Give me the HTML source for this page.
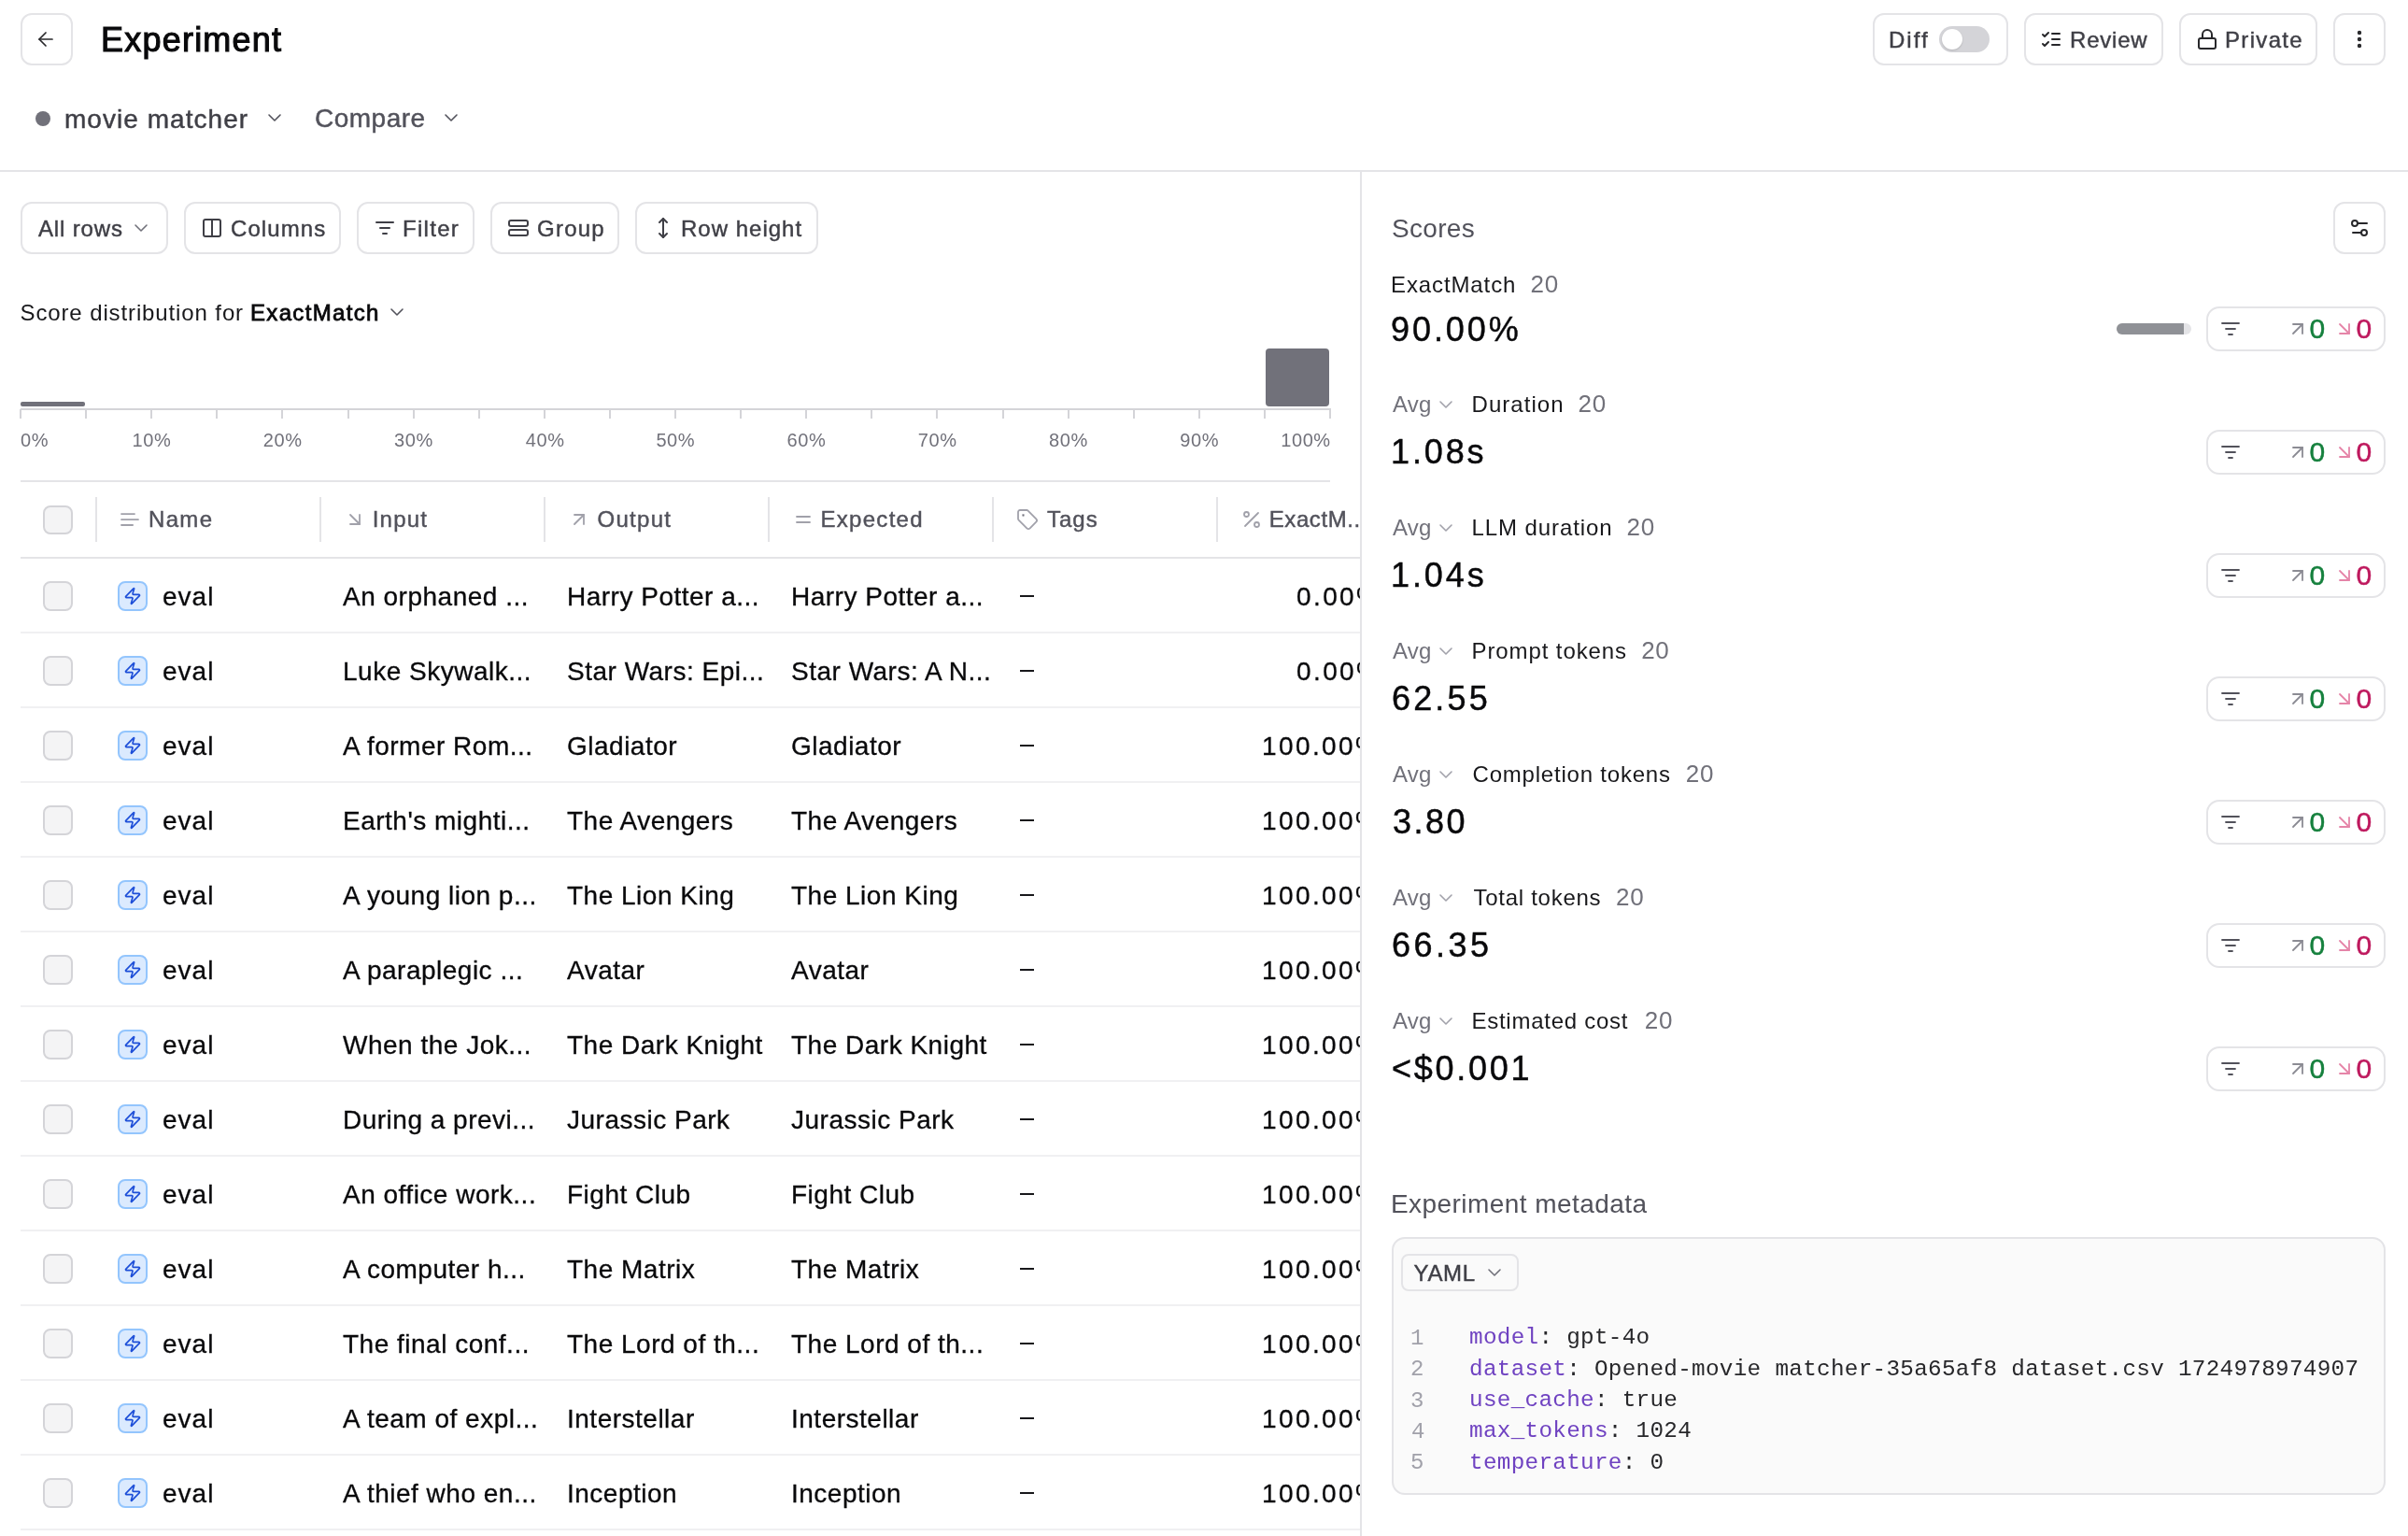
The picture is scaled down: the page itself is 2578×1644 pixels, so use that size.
<!DOCTYPE html>
<html><head><meta charset="utf-8"><title>Experiment</title>
<style>
html,body{margin:0;padding:0;background:#fff;}
body{width:2578px;height:1644px;position:relative;overflow:hidden;font-family:'Liberation Sans',sans-serif;}
.t{position:absolute;white-space:pre;}
.b{position:absolute;}
svg.b{overflow:visible;}
</style></head><body>
<div id="root" style="position:absolute;left:0;top:0;width:2578px;height:1644px;will-change:transform;background:#fff">
<div class="b" style="left:22px;top:14px;width:56px;height:56px;background:#fff;border:2px solid #e4e4e7;border-radius:12px;box-sizing:border-box;"></div>
<svg class="b" style="left:37px;top:30px;" width="24" height="24" viewBox="0 0 24 24" fill="none" stroke="#27272a" stroke-width="1.7" stroke-linecap="round" stroke-linejoin="round"><path d="m12 19-7-7 7-7"/><path d="M19 12H5"/></svg>
<div class="t" style="left:108.00px;top:25px;font:400 36px/36px 'Liberation Sans',sans-serif;color:#09090b;letter-spacing:1.222px;-webkit-text-stroke:1.1px #09090b;">Experiment</div>
<div class="b" style="left:38px;top:119px;width:16px;height:16px;background:#71717a;border-radius:8px;box-sizing:border-box;"></div>
<div class="t" style="left:69.00px;top:114px;font:400 28px/28px 'Liberation Sans',sans-serif;color:#3f3f46;letter-spacing:1.042px;-webkit-text-stroke:0.45px #3f3f46;">movie matcher</div>
<svg class="b" style="left:282px;top:114px;" width="24" height="24" viewBox="0 0 24 24" fill="none" stroke="#52525b" stroke-width="1.6" stroke-linecap="round" stroke-linejoin="round"><path d="m6 9 6 6 6-6"/></svg>
<div class="t" style="left:337.00px;top:113px;font:400 28px/28px 'Liberation Sans',sans-serif;color:#52525b;letter-spacing:0.500px;-webkit-text-stroke:0.45px #52525b;">Compare</div>
<svg class="b" style="left:471px;top:114px;" width="24" height="24" viewBox="0 0 24 24" fill="none" stroke="#52525b" stroke-width="1.6" stroke-linecap="round" stroke-linejoin="round"><path d="m6 9 6 6 6-6"/></svg>
<div class="b" style="left:0px;top:182px;width:2578px;height:2px;background:#e4e4e7;border-radius:0px;box-sizing:border-box;"></div>
<div class="b" style="left:2005px;top:14px;width:145px;height:56px;background:#fff;border:2px solid #e4e4e7;border-radius:12px;box-sizing:border-box;"></div>
<div class="t" style="left:2022.00px;top:31px;font:400 24px/24px 'Liberation Sans',sans-serif;color:#3f3f46;letter-spacing:2.000px;-webkit-text-stroke:0.45px #3f3f46;">Diff</div>
<div class="b" style="left:2076px;top:28px;width:54px;height:28px;background:#d4d4d8;border-radius:14px;box-sizing:border-box;"></div>
<div class="b" style="left:2079px;top:31px;width:22px;height:22px;background:#fff;border-radius:11px;box-sizing:border-box;box-shadow:0 1px 2px rgba(0,0,0,.15)"></div>
<div class="b" style="left:2167px;top:14px;width:149px;height:56px;background:#fff;border:2px solid #e4e4e7;border-radius:12px;box-sizing:border-box;"></div>
<svg class="b" style="left:2184px;top:30px;" width="24" height="24" viewBox="0 0 24 24" fill="none" stroke="#27272a" stroke-width="2" stroke-linecap="round" stroke-linejoin="round"><path d="m3 17 2 2 4-4"/><path d="m3 7 2 2 4-4"/><path d="M13 6h8"/><path d="M13 12h8"/><path d="M13 18h8"/></svg>
<div class="t" style="left:2216.00px;top:31px;font:400 24px/24px 'Liberation Sans',sans-serif;color:#3f3f46;letter-spacing:0.800px;-webkit-text-stroke:0.45px #3f3f46;">Review</div>
<div class="b" style="left:2333px;top:14px;width:148px;height:56px;background:#fff;border:2px solid #e4e4e7;border-radius:12px;box-sizing:border-box;"></div>
<svg class="b" style="left:2351px;top:30px;" width="24" height="24" viewBox="0 0 24 24" fill="none" stroke="#27272a" stroke-width="2" stroke-linecap="round" stroke-linejoin="round"><rect width="18" height="11" x="3" y="11" rx="2" ry="2"/><path d="M7 11V7a5 5 0 0 1 10 0v4"/></svg>
<div class="t" style="left:2382.00px;top:31px;font:400 24px/24px 'Liberation Sans',sans-serif;color:#3f3f46;letter-spacing:1.333px;-webkit-text-stroke:0.45px #3f3f46;">Private</div>
<div class="b" style="left:2498px;top:14px;width:56px;height:56px;background:#fff;border:2px solid #e4e4e7;border-radius:12px;box-sizing:border-box;"></div>
<svg class="b" style="left:2514px;top:30px;" width="24" height="24" viewBox="0 0 24 24" fill="none" stroke="#27272a" stroke-width="2.4" stroke-linecap="round" stroke-linejoin="round"><circle cx="12" cy="12" r="1"/><circle cx="12" cy="5" r="1"/><circle cx="12" cy="19" r="1"/></svg>
<div class="b" style="left:22px;top:216px;width:158px;height:56px;background:#fff;border:2px solid #e4e4e7;border-radius:12px;box-sizing:border-box;"></div>
<div class="t" style="left:41.00px;top:233px;font:400 24px/24px 'Liberation Sans',sans-serif;color:#3f3f46;letter-spacing:0.857px;-webkit-text-stroke:0.45px #3f3f46;">All rows</div>
<svg class="b" style="left:139px;top:232px;" width="24" height="24" viewBox="0 0 24 24" fill="none" stroke="#71717a" stroke-width="1.6" stroke-linecap="round" stroke-linejoin="round"><path d="m6 9 6 6 6-6"/></svg>
<div class="b" style="left:197px;top:216px;width:168px;height:56px;background:#fff;border:2px solid #e4e4e7;border-radius:12px;box-sizing:border-box;"></div>
<svg class="b" style="left:215px;top:232px;" width="24" height="24" viewBox="0 0 24 24" fill="none" stroke="#3f3f46" stroke-width="2" stroke-linecap="round" stroke-linejoin="round"><rect width="18" height="18" x="3" y="3" rx="2"/><path d="M12 3v18"/></svg>
<div class="t" style="left:247.00px;top:233px;font:400 24px/24px 'Liberation Sans',sans-serif;color:#3f3f46;letter-spacing:1.083px;-webkit-text-stroke:0.45px #3f3f46;">Columns</div>
<div class="b" style="left:382px;top:216px;width:126px;height:56px;background:#fff;border:2px solid #e4e4e7;border-radius:12px;box-sizing:border-box;"></div>
<svg class="b" style="left:400px;top:232px;" width="24" height="24" viewBox="0 0 24 24" fill="none" stroke="#3f3f46" stroke-width="2" stroke-linecap="round" stroke-linejoin="round"><path d="M3 6h18"/><path d="M7 12h10"/><path d="M10 18h4"/></svg>
<div class="t" style="left:431.00px;top:233px;font:400 24px/24px 'Liberation Sans',sans-serif;color:#3f3f46;letter-spacing:1.300px;-webkit-text-stroke:0.45px #3f3f46;">Filter</div>
<div class="b" style="left:525px;top:216px;width:138px;height:56px;background:#fff;border:2px solid #e4e4e7;border-radius:12px;box-sizing:border-box;"></div>
<svg class="b" style="left:543px;top:232px;" width="24" height="24" viewBox="0 0 24 24" fill="none" stroke="#3f3f46" stroke-width="2" stroke-linecap="round" stroke-linejoin="round"><rect width="20" height="6" x="2" y="4" rx="2"/><rect width="20" height="6" x="2" y="14" rx="2"/></svg>
<div class="t" style="left:575.00px;top:233px;font:400 24px/24px 'Liberation Sans',sans-serif;color:#3f3f46;letter-spacing:1.250px;-webkit-text-stroke:0.45px #3f3f46;">Group</div>
<div class="b" style="left:680px;top:216px;width:196px;height:56px;background:#fff;border:2px solid #e4e4e7;border-radius:12px;box-sizing:border-box;"></div>
<svg class="b" style="left:698px;top:232px;" width="24" height="24" viewBox="0 0 24 24" fill="none" stroke="#3f3f46" stroke-width="2" stroke-linecap="round" stroke-linejoin="round"><path d="M12 2v20"/><path d="m8 18 4 4 4-4"/><path d="m8 6 4-4 4 4"/></svg>
<div class="t" style="left:729.00px;top:233px;font:400 24px/24px 'Liberation Sans',sans-serif;color:#3f3f46;letter-spacing:1.000px;-webkit-text-stroke:0.45px #3f3f46;">Row height</div>
<div class="t" style="left:21.50px;top:323px;font:400 24px/24px 'Liberation Sans',sans-serif;color:#18181b;letter-spacing:0.881px;">Score distribution for</div>
<div class="t" style="left:268.00px;top:323px;font:400 24px/24px 'Liberation Sans',sans-serif;color:#09090b;letter-spacing:1.333px;-webkit-text-stroke:0.8px #09090b;">ExactMatch</div>
<svg class="b" style="left:413px;top:322px;" width="24" height="24" viewBox="0 0 24 24" fill="none" stroke="#52525b" stroke-width="1.6" stroke-linecap="round" stroke-linejoin="round"><path d="m6 9 6 6 6-6"/></svg>
<div class="b" style="left:22px;top:430px;width:69px;height:5px;background:#71717a;border-radius:2px;box-sizing:border-box;"></div>
<div class="b" style="left:1355px;top:373px;width:68px;height:62px;background:#71717a;border-radius:4px;box-sizing:border-box;"></div>
<div class="b" style="left:22px;top:437px;width:1403px;height:2px;background:#d4d4d8;border-radius:0px;box-sizing:border-box;"></div>
<div class="b" style="left:21.0px;top:438px;width:2px;height:10px;background:#d4d4d8"></div>
<div class="b" style="left:91.1px;top:438px;width:2px;height:10px;background:#d4d4d8"></div>
<div class="b" style="left:161.2px;top:438px;width:2px;height:10px;background:#d4d4d8"></div>
<div class="b" style="left:231.3px;top:438px;width:2px;height:10px;background:#d4d4d8"></div>
<div class="b" style="left:301.4px;top:438px;width:2px;height:10px;background:#d4d4d8"></div>
<div class="b" style="left:371.5px;top:438px;width:2px;height:10px;background:#d4d4d8"></div>
<div class="b" style="left:441.6px;top:438px;width:2px;height:10px;background:#d4d4d8"></div>
<div class="b" style="left:511.7px;top:438px;width:2px;height:10px;background:#d4d4d8"></div>
<div class="b" style="left:581.8px;top:438px;width:2px;height:10px;background:#d4d4d8"></div>
<div class="b" style="left:651.9px;top:438px;width:2px;height:10px;background:#d4d4d8"></div>
<div class="b" style="left:722.0px;top:438px;width:2px;height:10px;background:#d4d4d8"></div>
<div class="b" style="left:792.1px;top:438px;width:2px;height:10px;background:#d4d4d8"></div>
<div class="b" style="left:862.2px;top:438px;width:2px;height:10px;background:#d4d4d8"></div>
<div class="b" style="left:932.3px;top:438px;width:2px;height:10px;background:#d4d4d8"></div>
<div class="b" style="left:1002.4px;top:438px;width:2px;height:10px;background:#d4d4d8"></div>
<div class="b" style="left:1072.5px;top:438px;width:2px;height:10px;background:#d4d4d8"></div>
<div class="b" style="left:1142.6px;top:438px;width:2px;height:10px;background:#d4d4d8"></div>
<div class="b" style="left:1212.7px;top:438px;width:2px;height:10px;background:#d4d4d8"></div>
<div class="b" style="left:1282.8px;top:438px;width:2px;height:10px;background:#d4d4d8"></div>
<div class="b" style="left:1352.9px;top:438px;width:2px;height:10px;background:#d4d4d8"></div>
<div class="b" style="left:1423.0px;top:438px;width:2px;height:10px;background:#d4d4d8"></div>
<div class="t" style="left:22.00px;top:461px;font:400 20px/20px 'Liberation Sans',sans-serif;color:#71717a;letter-spacing:0.600px;">0%</div>
<div class="t" style="left:141.60px;top:461px;font:400 20px/20px 'Liberation Sans',sans-serif;color:#71717a;letter-spacing:0.600px;">10%</div>
<div class="t" style="left:281.80px;top:461px;font:400 20px/20px 'Liberation Sans',sans-serif;color:#71717a;letter-spacing:0.600px;">20%</div>
<div class="t" style="left:422.00px;top:461px;font:400 20px/20px 'Liberation Sans',sans-serif;color:#71717a;letter-spacing:0.600px;">30%</div>
<div class="t" style="left:562.70px;top:461px;font:400 20px/20px 'Liberation Sans',sans-serif;color:#71717a;letter-spacing:0.600px;">40%</div>
<div class="t" style="left:702.40px;top:461px;font:400 20px/20px 'Liberation Sans',sans-serif;color:#71717a;letter-spacing:0.600px;">50%</div>
<div class="t" style="left:842.60px;top:461px;font:400 20px/20px 'Liberation Sans',sans-serif;color:#71717a;letter-spacing:0.600px;">60%</div>
<div class="t" style="left:982.80px;top:461px;font:400 20px/20px 'Liberation Sans',sans-serif;color:#71717a;letter-spacing:0.600px;">70%</div>
<div class="t" style="left:1123.00px;top:461px;font:400 20px/20px 'Liberation Sans',sans-serif;color:#71717a;letter-spacing:0.600px;">80%</div>
<div class="t" style="left:1263.20px;top:461px;font:400 20px/20px 'Liberation Sans',sans-serif;color:#71717a;letter-spacing:0.600px;">90%</div>
<div class="t" style="left:1371.20px;top:461px;font:400 20px/20px 'Liberation Sans',sans-serif;color:#71717a;letter-spacing:0.600px;">100%</div>
<div class="b" style="left:0;top:500px;width:1456px;height:1144px;overflow:hidden">
<div class="b" style="left:22px;top:14px;width:1402px;height:2px;background:#e4e4e7;border-radius:0px;box-sizing:border-box;"></div>
<div class="b" style="left:46px;top:40.5px;width:32px;height:31.5px;background:#f4f4f5;border:2px solid #d4d4d8;border-radius:8px;box-sizing:border-box;"></div>
<div class="b" style="left:102px;top:32px;width:2px;height:48px;background:#e4e4e7;border-radius:0px;box-sizing:border-box;"></div>
<div class="b" style="left:342px;top:32px;width:2px;height:48px;background:#e4e4e7;border-radius:0px;box-sizing:border-box;"></div>
<div class="b" style="left:582px;top:32px;width:2px;height:48px;background:#e4e4e7;border-radius:0px;box-sizing:border-box;"></div>
<div class="b" style="left:822px;top:32px;width:2px;height:48px;background:#e4e4e7;border-radius:0px;box-sizing:border-box;"></div>
<div class="b" style="left:1062px;top:32px;width:2px;height:48px;background:#e4e4e7;border-radius:0px;box-sizing:border-box;"></div>
<div class="b" style="left:1302px;top:32px;width:2px;height:48px;background:#e4e4e7;border-radius:0px;box-sizing:border-box;"></div>
<div class="b" style="left:22px;top:96px;width:1434px;height:2px;background:#e4e4e7;border-radius:0px;box-sizing:border-box;"></div>
<svg class="b" style="left:127px;top:44px;" width="24" height="24" viewBox="0 0 24 24" fill="none" stroke="#a1a1aa" stroke-width="1.8" stroke-linecap="round" stroke-linejoin="round"><path d="M17 6.1H3"/><path d="M21 12.1H3"/><path d="M15.1 18H3"/></svg>
<div class="t" style="left:159.00px;top:44px;font:400 24px/24px 'Liberation Sans',sans-serif;color:#52525b;letter-spacing:1.333px;-webkit-text-stroke:0.45px #52525b;">Name</div>
<svg class="b" style="left:368px;top:44px;" width="24" height="24" viewBox="0 0 24 24" fill="none" stroke="#a1a1aa" stroke-width="1.8" stroke-linecap="round" stroke-linejoin="round"><path d="M7 7l10 10"/><path d="M17 7v10H7"/></svg>
<div class="t" style="left:398.75px;top:44px;font:400 24px/24px 'Liberation Sans',sans-serif;color:#52525b;letter-spacing:1.188px;-webkit-text-stroke:0.45px #52525b;">Input</div>
<svg class="b" style="left:608px;top:44px;" width="24" height="24" viewBox="0 0 24 24" fill="none" stroke="#a1a1aa" stroke-width="1.8" stroke-linecap="round" stroke-linejoin="round"><path d="M7 17 17 7"/><path d="M7 7h10v10"/></svg>
<div class="t" style="left:639.40px;top:44px;font:400 24px/24px 'Liberation Sans',sans-serif;color:#52525b;letter-spacing:1.320px;-webkit-text-stroke:0.45px #52525b;">Output</div>
<svg class="b" style="left:848px;top:44px;" width="24" height="24" viewBox="0 0 24 24" fill="none" stroke="#a1a1aa" stroke-width="1.8" stroke-linecap="round" stroke-linejoin="round"><path d="M5 9h14"/><path d="M5 15h14"/></svg>
<div class="t" style="left:878.50px;top:44px;font:400 24px/24px 'Liberation Sans',sans-serif;color:#52525b;letter-spacing:1.286px;-webkit-text-stroke:0.45px #52525b;">Expected</div>
<svg class="b" style="left:1088px;top:44px;" width="24" height="24" viewBox="0 0 24 24" fill="none" stroke="#a1a1aa" stroke-width="1.8" stroke-linecap="round" stroke-linejoin="round"><path d="M12.586 2.586A2 2 0 0 0 11.172 2H4a2 2 0 0 0-2 2v7.172a2 2 0 0 0 .586 1.414l8.704 8.704a2.426 2.426 0 0 0 3.42 0l6.58-6.58a2.426 2.426 0 0 0 0-3.42z"/><circle cx="7.5" cy="7.5" r=".5" fill="currentColor"/></svg>
<div class="t" style="left:1121.00px;top:44px;font:400 24px/24px 'Liberation Sans',sans-serif;color:#52525b;letter-spacing:1.000px;-webkit-text-stroke:0.45px #52525b;">Tags</div>
<svg class="b" style="left:1328px;top:44px;" width="24" height="24" viewBox="0 0 24 24" fill="none" stroke="#a1a1aa" stroke-width="1.8" stroke-linecap="round" stroke-linejoin="round"><line x1="19" x2="5" y1="5" y2="19"/><circle cx="6.5" cy="6.5" r="2.5"/><circle cx="17.5" cy="17.5" r="2.5"/></svg>
<div class="t" style="left:1358.70px;top:44px;font:400 24px/24px 'Liberation Sans',sans-serif;color:#52525b;letter-spacing:0.600px;-webkit-text-stroke:0.45px #52525b;">ExactM...</div>
<div class="b" style="left:46px;top:122px;width:32px;height:32px;background:#f4f4f5;border:2px solid #d4d4d8;border-radius:8px;box-sizing:border-box;"></div>
<div class="b" style="left:126px;top:122px;width:32px;height:32px;background:#dbeafe;border:2px solid #93c5fd;border-radius:8px;box-sizing:border-box;"></div>
<svg class="b" style="left:132px;top:128px;" width="20" height="20" viewBox="0 0 24 24" fill="none" stroke="#1d4ed8" stroke-width="2.0" stroke-linecap="round" stroke-linejoin="round"><path d="M4 14a1 1 0 0 1-.78-1.63l9.9-10.2a.5.5 0 0 1 .86.46l-1.92 6.02A1 1 0 0 0 13 10h7a1 1 0 0 1 .78 1.63l-9.9 10.2a.5.5 0 0 1-.86-.46l1.92-6.02A1 1 0 0 0 11 14z"/></svg>
<div class="t" style="left:174.00px;top:125px;font:400 28px/28px 'Liberation Sans',sans-serif;color:#09090b;letter-spacing:1.000px;-webkit-text-stroke:0.3px #09090b;">eval</div>
<div class="t" style="left:367.00px;top:125px;font:400 28px/28px 'Liberation Sans',sans-serif;color:#09090b;letter-spacing:0.500px;-webkit-text-stroke:0.3px #09090b;">An orphaned ...</div>
<div class="t" style="left:607.00px;top:125px;font:400 28px/28px 'Liberation Sans',sans-serif;color:#09090b;letter-spacing:0.500px;-webkit-text-stroke:0.3px #09090b;">Harry Potter a...</div>
<div class="t" style="left:847.00px;top:125px;font:400 28px/28px 'Liberation Sans',sans-serif;color:#09090b;letter-spacing:0.500px;-webkit-text-stroke:0.3px #09090b;">Harry Potter a...</div>
<div class="b" style="left:1092px;top:137px;width:15px;height:2px;background:#18181b;border-radius:0px;box-sizing:border-box;"></div>
<div class="t" style="left:1388.00px;top:125px;font:400 28px/28px 'Liberation Sans',sans-serif;color:#09090b;letter-spacing:2.400px;-webkit-text-stroke:0.3px #09090b;">0.00%</div>
<div class="b" style="left:22px;top:176px;width:1434px;height:2px;background:#f0f0f2;border-radius:0px;box-sizing:border-box;"></div>
<div class="b" style="left:46px;top:202px;width:32px;height:32px;background:#f4f4f5;border:2px solid #d4d4d8;border-radius:8px;box-sizing:border-box;"></div>
<div class="b" style="left:126px;top:202px;width:32px;height:32px;background:#dbeafe;border:2px solid #93c5fd;border-radius:8px;box-sizing:border-box;"></div>
<svg class="b" style="left:132px;top:208px;" width="20" height="20" viewBox="0 0 24 24" fill="none" stroke="#1d4ed8" stroke-width="2.0" stroke-linecap="round" stroke-linejoin="round"><path d="M4 14a1 1 0 0 1-.78-1.63l9.9-10.2a.5.5 0 0 1 .86.46l-1.92 6.02A1 1 0 0 0 13 10h7a1 1 0 0 1 .78 1.63l-9.9 10.2a.5.5 0 0 1-.86-.46l1.92-6.02A1 1 0 0 0 11 14z"/></svg>
<div class="t" style="left:174.00px;top:205px;font:400 28px/28px 'Liberation Sans',sans-serif;color:#09090b;letter-spacing:1.000px;-webkit-text-stroke:0.3px #09090b;">eval</div>
<div class="t" style="left:367.00px;top:205px;font:400 28px/28px 'Liberation Sans',sans-serif;color:#09090b;letter-spacing:0.500px;-webkit-text-stroke:0.3px #09090b;">Luke Skywalk...</div>
<div class="t" style="left:607.00px;top:205px;font:400 28px/28px 'Liberation Sans',sans-serif;color:#09090b;letter-spacing:0.500px;-webkit-text-stroke:0.3px #09090b;">Star Wars: Epi...</div>
<div class="t" style="left:847.00px;top:205px;font:400 28px/28px 'Liberation Sans',sans-serif;color:#09090b;letter-spacing:0.500px;-webkit-text-stroke:0.3px #09090b;">Star Wars: A N...</div>
<div class="b" style="left:1092px;top:217px;width:15px;height:2px;background:#18181b;border-radius:0px;box-sizing:border-box;"></div>
<div class="t" style="left:1388.00px;top:205px;font:400 28px/28px 'Liberation Sans',sans-serif;color:#09090b;letter-spacing:2.400px;-webkit-text-stroke:0.3px #09090b;">0.00%</div>
<div class="b" style="left:22px;top:256px;width:1434px;height:2px;background:#f0f0f2;border-radius:0px;box-sizing:border-box;"></div>
<div class="b" style="left:46px;top:282px;width:32px;height:32px;background:#f4f4f5;border:2px solid #d4d4d8;border-radius:8px;box-sizing:border-box;"></div>
<div class="b" style="left:126px;top:282px;width:32px;height:32px;background:#dbeafe;border:2px solid #93c5fd;border-radius:8px;box-sizing:border-box;"></div>
<svg class="b" style="left:132px;top:288px;" width="20" height="20" viewBox="0 0 24 24" fill="none" stroke="#1d4ed8" stroke-width="2.0" stroke-linecap="round" stroke-linejoin="round"><path d="M4 14a1 1 0 0 1-.78-1.63l9.9-10.2a.5.5 0 0 1 .86.46l-1.92 6.02A1 1 0 0 0 13 10h7a1 1 0 0 1 .78 1.63l-9.9 10.2a.5.5 0 0 1-.86-.46l1.92-6.02A1 1 0 0 0 11 14z"/></svg>
<div class="t" style="left:174.00px;top:285px;font:400 28px/28px 'Liberation Sans',sans-serif;color:#09090b;letter-spacing:1.000px;-webkit-text-stroke:0.3px #09090b;">eval</div>
<div class="t" style="left:367.00px;top:285px;font:400 28px/28px 'Liberation Sans',sans-serif;color:#09090b;letter-spacing:0.500px;-webkit-text-stroke:0.3px #09090b;">A former Rom...</div>
<div class="t" style="left:607.00px;top:285px;font:400 28px/28px 'Liberation Sans',sans-serif;color:#09090b;letter-spacing:0.500px;-webkit-text-stroke:0.3px #09090b;">Gladiator</div>
<div class="t" style="left:847.00px;top:285px;font:400 28px/28px 'Liberation Sans',sans-serif;color:#09090b;letter-spacing:0.500px;-webkit-text-stroke:0.3px #09090b;">Gladiator</div>
<div class="b" style="left:1092px;top:297px;width:15px;height:2px;background:#18181b;border-radius:0px;box-sizing:border-box;"></div>
<div class="t" style="left:1351.00px;top:285px;font:400 28px/28px 'Liberation Sans',sans-serif;color:#09090b;letter-spacing:2.400px;-webkit-text-stroke:0.3px #09090b;">100.00%</div>
<div class="b" style="left:22px;top:336px;width:1434px;height:2px;background:#f0f0f2;border-radius:0px;box-sizing:border-box;"></div>
<div class="b" style="left:46px;top:362px;width:32px;height:32px;background:#f4f4f5;border:2px solid #d4d4d8;border-radius:8px;box-sizing:border-box;"></div>
<div class="b" style="left:126px;top:362px;width:32px;height:32px;background:#dbeafe;border:2px solid #93c5fd;border-radius:8px;box-sizing:border-box;"></div>
<svg class="b" style="left:132px;top:368px;" width="20" height="20" viewBox="0 0 24 24" fill="none" stroke="#1d4ed8" stroke-width="2.0" stroke-linecap="round" stroke-linejoin="round"><path d="M4 14a1 1 0 0 1-.78-1.63l9.9-10.2a.5.5 0 0 1 .86.46l-1.92 6.02A1 1 0 0 0 13 10h7a1 1 0 0 1 .78 1.63l-9.9 10.2a.5.5 0 0 1-.86-.46l1.92-6.02A1 1 0 0 0 11 14z"/></svg>
<div class="t" style="left:174.00px;top:365px;font:400 28px/28px 'Liberation Sans',sans-serif;color:#09090b;letter-spacing:1.000px;-webkit-text-stroke:0.3px #09090b;">eval</div>
<div class="t" style="left:367.00px;top:365px;font:400 28px/28px 'Liberation Sans',sans-serif;color:#09090b;letter-spacing:0.500px;-webkit-text-stroke:0.3px #09090b;">Earth&#x27;s mighti...</div>
<div class="t" style="left:607.00px;top:365px;font:400 28px/28px 'Liberation Sans',sans-serif;color:#09090b;letter-spacing:0.500px;-webkit-text-stroke:0.3px #09090b;">The Avengers</div>
<div class="t" style="left:847.00px;top:365px;font:400 28px/28px 'Liberation Sans',sans-serif;color:#09090b;letter-spacing:0.500px;-webkit-text-stroke:0.3px #09090b;">The Avengers</div>
<div class="b" style="left:1092px;top:377px;width:15px;height:2px;background:#18181b;border-radius:0px;box-sizing:border-box;"></div>
<div class="t" style="left:1351.00px;top:365px;font:400 28px/28px 'Liberation Sans',sans-serif;color:#09090b;letter-spacing:2.400px;-webkit-text-stroke:0.3px #09090b;">100.00%</div>
<div class="b" style="left:22px;top:416px;width:1434px;height:2px;background:#f0f0f2;border-radius:0px;box-sizing:border-box;"></div>
<div class="b" style="left:46px;top:442px;width:32px;height:32px;background:#f4f4f5;border:2px solid #d4d4d8;border-radius:8px;box-sizing:border-box;"></div>
<div class="b" style="left:126px;top:442px;width:32px;height:32px;background:#dbeafe;border:2px solid #93c5fd;border-radius:8px;box-sizing:border-box;"></div>
<svg class="b" style="left:132px;top:448px;" width="20" height="20" viewBox="0 0 24 24" fill="none" stroke="#1d4ed8" stroke-width="2.0" stroke-linecap="round" stroke-linejoin="round"><path d="M4 14a1 1 0 0 1-.78-1.63l9.9-10.2a.5.5 0 0 1 .86.46l-1.92 6.02A1 1 0 0 0 13 10h7a1 1 0 0 1 .78 1.63l-9.9 10.2a.5.5 0 0 1-.86-.46l1.92-6.02A1 1 0 0 0 11 14z"/></svg>
<div class="t" style="left:174.00px;top:445px;font:400 28px/28px 'Liberation Sans',sans-serif;color:#09090b;letter-spacing:1.000px;-webkit-text-stroke:0.3px #09090b;">eval</div>
<div class="t" style="left:367.00px;top:445px;font:400 28px/28px 'Liberation Sans',sans-serif;color:#09090b;letter-spacing:0.500px;-webkit-text-stroke:0.3px #09090b;">A young lion p...</div>
<div class="t" style="left:607.00px;top:445px;font:400 28px/28px 'Liberation Sans',sans-serif;color:#09090b;letter-spacing:0.500px;-webkit-text-stroke:0.3px #09090b;">The Lion King</div>
<div class="t" style="left:847.00px;top:445px;font:400 28px/28px 'Liberation Sans',sans-serif;color:#09090b;letter-spacing:0.500px;-webkit-text-stroke:0.3px #09090b;">The Lion King</div>
<div class="b" style="left:1092px;top:457px;width:15px;height:2px;background:#18181b;border-radius:0px;box-sizing:border-box;"></div>
<div class="t" style="left:1351.00px;top:445px;font:400 28px/28px 'Liberation Sans',sans-serif;color:#09090b;letter-spacing:2.400px;-webkit-text-stroke:0.3px #09090b;">100.00%</div>
<div class="b" style="left:22px;top:496px;width:1434px;height:2px;background:#f0f0f2;border-radius:0px;box-sizing:border-box;"></div>
<div class="b" style="left:46px;top:522px;width:32px;height:32px;background:#f4f4f5;border:2px solid #d4d4d8;border-radius:8px;box-sizing:border-box;"></div>
<div class="b" style="left:126px;top:522px;width:32px;height:32px;background:#dbeafe;border:2px solid #93c5fd;border-radius:8px;box-sizing:border-box;"></div>
<svg class="b" style="left:132px;top:528px;" width="20" height="20" viewBox="0 0 24 24" fill="none" stroke="#1d4ed8" stroke-width="2.0" stroke-linecap="round" stroke-linejoin="round"><path d="M4 14a1 1 0 0 1-.78-1.63l9.9-10.2a.5.5 0 0 1 .86.46l-1.92 6.02A1 1 0 0 0 13 10h7a1 1 0 0 1 .78 1.63l-9.9 10.2a.5.5 0 0 1-.86-.46l1.92-6.02A1 1 0 0 0 11 14z"/></svg>
<div class="t" style="left:174.00px;top:525px;font:400 28px/28px 'Liberation Sans',sans-serif;color:#09090b;letter-spacing:1.000px;-webkit-text-stroke:0.3px #09090b;">eval</div>
<div class="t" style="left:367.00px;top:525px;font:400 28px/28px 'Liberation Sans',sans-serif;color:#09090b;letter-spacing:0.500px;-webkit-text-stroke:0.3px #09090b;">A paraplegic ...</div>
<div class="t" style="left:607.00px;top:525px;font:400 28px/28px 'Liberation Sans',sans-serif;color:#09090b;letter-spacing:0.500px;-webkit-text-stroke:0.3px #09090b;">Avatar</div>
<div class="t" style="left:847.00px;top:525px;font:400 28px/28px 'Liberation Sans',sans-serif;color:#09090b;letter-spacing:0.500px;-webkit-text-stroke:0.3px #09090b;">Avatar</div>
<div class="b" style="left:1092px;top:537px;width:15px;height:2px;background:#18181b;border-radius:0px;box-sizing:border-box;"></div>
<div class="t" style="left:1351.00px;top:525px;font:400 28px/28px 'Liberation Sans',sans-serif;color:#09090b;letter-spacing:2.400px;-webkit-text-stroke:0.3px #09090b;">100.00%</div>
<div class="b" style="left:22px;top:576px;width:1434px;height:2px;background:#f0f0f2;border-radius:0px;box-sizing:border-box;"></div>
<div class="b" style="left:46px;top:602px;width:32px;height:32px;background:#f4f4f5;border:2px solid #d4d4d8;border-radius:8px;box-sizing:border-box;"></div>
<div class="b" style="left:126px;top:602px;width:32px;height:32px;background:#dbeafe;border:2px solid #93c5fd;border-radius:8px;box-sizing:border-box;"></div>
<svg class="b" style="left:132px;top:608px;" width="20" height="20" viewBox="0 0 24 24" fill="none" stroke="#1d4ed8" stroke-width="2.0" stroke-linecap="round" stroke-linejoin="round"><path d="M4 14a1 1 0 0 1-.78-1.63l9.9-10.2a.5.5 0 0 1 .86.46l-1.92 6.02A1 1 0 0 0 13 10h7a1 1 0 0 1 .78 1.63l-9.9 10.2a.5.5 0 0 1-.86-.46l1.92-6.02A1 1 0 0 0 11 14z"/></svg>
<div class="t" style="left:174.00px;top:605px;font:400 28px/28px 'Liberation Sans',sans-serif;color:#09090b;letter-spacing:1.000px;-webkit-text-stroke:0.3px #09090b;">eval</div>
<div class="t" style="left:367.00px;top:605px;font:400 28px/28px 'Liberation Sans',sans-serif;color:#09090b;letter-spacing:0.500px;-webkit-text-stroke:0.3px #09090b;">When the Jok...</div>
<div class="t" style="left:607.00px;top:605px;font:400 28px/28px 'Liberation Sans',sans-serif;color:#09090b;letter-spacing:0.500px;-webkit-text-stroke:0.3px #09090b;">The Dark Knight</div>
<div class="t" style="left:847.00px;top:605px;font:400 28px/28px 'Liberation Sans',sans-serif;color:#09090b;letter-spacing:0.500px;-webkit-text-stroke:0.3px #09090b;">The Dark Knight</div>
<div class="b" style="left:1092px;top:617px;width:15px;height:2px;background:#18181b;border-radius:0px;box-sizing:border-box;"></div>
<div class="t" style="left:1351.00px;top:605px;font:400 28px/28px 'Liberation Sans',sans-serif;color:#09090b;letter-spacing:2.400px;-webkit-text-stroke:0.3px #09090b;">100.00%</div>
<div class="b" style="left:22px;top:656px;width:1434px;height:2px;background:#f0f0f2;border-radius:0px;box-sizing:border-box;"></div>
<div class="b" style="left:46px;top:682px;width:32px;height:32px;background:#f4f4f5;border:2px solid #d4d4d8;border-radius:8px;box-sizing:border-box;"></div>
<div class="b" style="left:126px;top:682px;width:32px;height:32px;background:#dbeafe;border:2px solid #93c5fd;border-radius:8px;box-sizing:border-box;"></div>
<svg class="b" style="left:132px;top:688px;" width="20" height="20" viewBox="0 0 24 24" fill="none" stroke="#1d4ed8" stroke-width="2.0" stroke-linecap="round" stroke-linejoin="round"><path d="M4 14a1 1 0 0 1-.78-1.63l9.9-10.2a.5.5 0 0 1 .86.46l-1.92 6.02A1 1 0 0 0 13 10h7a1 1 0 0 1 .78 1.63l-9.9 10.2a.5.5 0 0 1-.86-.46l1.92-6.02A1 1 0 0 0 11 14z"/></svg>
<div class="t" style="left:174.00px;top:685px;font:400 28px/28px 'Liberation Sans',sans-serif;color:#09090b;letter-spacing:1.000px;-webkit-text-stroke:0.3px #09090b;">eval</div>
<div class="t" style="left:367.00px;top:685px;font:400 28px/28px 'Liberation Sans',sans-serif;color:#09090b;letter-spacing:0.500px;-webkit-text-stroke:0.3px #09090b;">During a previ...</div>
<div class="t" style="left:607.00px;top:685px;font:400 28px/28px 'Liberation Sans',sans-serif;color:#09090b;letter-spacing:0.500px;-webkit-text-stroke:0.3px #09090b;">Jurassic Park</div>
<div class="t" style="left:847.00px;top:685px;font:400 28px/28px 'Liberation Sans',sans-serif;color:#09090b;letter-spacing:0.500px;-webkit-text-stroke:0.3px #09090b;">Jurassic Park</div>
<div class="b" style="left:1092px;top:697px;width:15px;height:2px;background:#18181b;border-radius:0px;box-sizing:border-box;"></div>
<div class="t" style="left:1351.00px;top:685px;font:400 28px/28px 'Liberation Sans',sans-serif;color:#09090b;letter-spacing:2.400px;-webkit-text-stroke:0.3px #09090b;">100.00%</div>
<div class="b" style="left:22px;top:736px;width:1434px;height:2px;background:#f0f0f2;border-radius:0px;box-sizing:border-box;"></div>
<div class="b" style="left:46px;top:762px;width:32px;height:32px;background:#f4f4f5;border:2px solid #d4d4d8;border-radius:8px;box-sizing:border-box;"></div>
<div class="b" style="left:126px;top:762px;width:32px;height:32px;background:#dbeafe;border:2px solid #93c5fd;border-radius:8px;box-sizing:border-box;"></div>
<svg class="b" style="left:132px;top:768px;" width="20" height="20" viewBox="0 0 24 24" fill="none" stroke="#1d4ed8" stroke-width="2.0" stroke-linecap="round" stroke-linejoin="round"><path d="M4 14a1 1 0 0 1-.78-1.63l9.9-10.2a.5.5 0 0 1 .86.46l-1.92 6.02A1 1 0 0 0 13 10h7a1 1 0 0 1 .78 1.63l-9.9 10.2a.5.5 0 0 1-.86-.46l1.92-6.02A1 1 0 0 0 11 14z"/></svg>
<div class="t" style="left:174.00px;top:765px;font:400 28px/28px 'Liberation Sans',sans-serif;color:#09090b;letter-spacing:1.000px;-webkit-text-stroke:0.3px #09090b;">eval</div>
<div class="t" style="left:367.00px;top:765px;font:400 28px/28px 'Liberation Sans',sans-serif;color:#09090b;letter-spacing:0.500px;-webkit-text-stroke:0.3px #09090b;">An office work...</div>
<div class="t" style="left:607.00px;top:765px;font:400 28px/28px 'Liberation Sans',sans-serif;color:#09090b;letter-spacing:0.500px;-webkit-text-stroke:0.3px #09090b;">Fight Club</div>
<div class="t" style="left:847.00px;top:765px;font:400 28px/28px 'Liberation Sans',sans-serif;color:#09090b;letter-spacing:0.500px;-webkit-text-stroke:0.3px #09090b;">Fight Club</div>
<div class="b" style="left:1092px;top:777px;width:15px;height:2px;background:#18181b;border-radius:0px;box-sizing:border-box;"></div>
<div class="t" style="left:1351.00px;top:765px;font:400 28px/28px 'Liberation Sans',sans-serif;color:#09090b;letter-spacing:2.400px;-webkit-text-stroke:0.3px #09090b;">100.00%</div>
<div class="b" style="left:22px;top:816px;width:1434px;height:2px;background:#f0f0f2;border-radius:0px;box-sizing:border-box;"></div>
<div class="b" style="left:46px;top:842px;width:32px;height:32px;background:#f4f4f5;border:2px solid #d4d4d8;border-radius:8px;box-sizing:border-box;"></div>
<div class="b" style="left:126px;top:842px;width:32px;height:32px;background:#dbeafe;border:2px solid #93c5fd;border-radius:8px;box-sizing:border-box;"></div>
<svg class="b" style="left:132px;top:848px;" width="20" height="20" viewBox="0 0 24 24" fill="none" stroke="#1d4ed8" stroke-width="2.0" stroke-linecap="round" stroke-linejoin="round"><path d="M4 14a1 1 0 0 1-.78-1.63l9.9-10.2a.5.5 0 0 1 .86.46l-1.92 6.02A1 1 0 0 0 13 10h7a1 1 0 0 1 .78 1.63l-9.9 10.2a.5.5 0 0 1-.86-.46l1.92-6.02A1 1 0 0 0 11 14z"/></svg>
<div class="t" style="left:174.00px;top:845px;font:400 28px/28px 'Liberation Sans',sans-serif;color:#09090b;letter-spacing:1.000px;-webkit-text-stroke:0.3px #09090b;">eval</div>
<div class="t" style="left:367.00px;top:845px;font:400 28px/28px 'Liberation Sans',sans-serif;color:#09090b;letter-spacing:0.500px;-webkit-text-stroke:0.3px #09090b;">A computer h...</div>
<div class="t" style="left:607.00px;top:845px;font:400 28px/28px 'Liberation Sans',sans-serif;color:#09090b;letter-spacing:0.500px;-webkit-text-stroke:0.3px #09090b;">The Matrix</div>
<div class="t" style="left:847.00px;top:845px;font:400 28px/28px 'Liberation Sans',sans-serif;color:#09090b;letter-spacing:0.500px;-webkit-text-stroke:0.3px #09090b;">The Matrix</div>
<div class="b" style="left:1092px;top:857px;width:15px;height:2px;background:#18181b;border-radius:0px;box-sizing:border-box;"></div>
<div class="t" style="left:1351.00px;top:845px;font:400 28px/28px 'Liberation Sans',sans-serif;color:#09090b;letter-spacing:2.400px;-webkit-text-stroke:0.3px #09090b;">100.00%</div>
<div class="b" style="left:22px;top:896px;width:1434px;height:2px;background:#f0f0f2;border-radius:0px;box-sizing:border-box;"></div>
<div class="b" style="left:46px;top:922px;width:32px;height:32px;background:#f4f4f5;border:2px solid #d4d4d8;border-radius:8px;box-sizing:border-box;"></div>
<div class="b" style="left:126px;top:922px;width:32px;height:32px;background:#dbeafe;border:2px solid #93c5fd;border-radius:8px;box-sizing:border-box;"></div>
<svg class="b" style="left:132px;top:928px;" width="20" height="20" viewBox="0 0 24 24" fill="none" stroke="#1d4ed8" stroke-width="2.0" stroke-linecap="round" stroke-linejoin="round"><path d="M4 14a1 1 0 0 1-.78-1.63l9.9-10.2a.5.5 0 0 1 .86.46l-1.92 6.02A1 1 0 0 0 13 10h7a1 1 0 0 1 .78 1.63l-9.9 10.2a.5.5 0 0 1-.86-.46l1.92-6.02A1 1 0 0 0 11 14z"/></svg>
<div class="t" style="left:174.00px;top:925px;font:400 28px/28px 'Liberation Sans',sans-serif;color:#09090b;letter-spacing:1.000px;-webkit-text-stroke:0.3px #09090b;">eval</div>
<div class="t" style="left:367.00px;top:925px;font:400 28px/28px 'Liberation Sans',sans-serif;color:#09090b;letter-spacing:0.500px;-webkit-text-stroke:0.3px #09090b;">The final conf...</div>
<div class="t" style="left:607.00px;top:925px;font:400 28px/28px 'Liberation Sans',sans-serif;color:#09090b;letter-spacing:0.500px;-webkit-text-stroke:0.3px #09090b;">The Lord of th...</div>
<div class="t" style="left:847.00px;top:925px;font:400 28px/28px 'Liberation Sans',sans-serif;color:#09090b;letter-spacing:0.500px;-webkit-text-stroke:0.3px #09090b;">The Lord of th...</div>
<div class="b" style="left:1092px;top:937px;width:15px;height:2px;background:#18181b;border-radius:0px;box-sizing:border-box;"></div>
<div class="t" style="left:1351.00px;top:925px;font:400 28px/28px 'Liberation Sans',sans-serif;color:#09090b;letter-spacing:2.400px;-webkit-text-stroke:0.3px #09090b;">100.00%</div>
<div class="b" style="left:22px;top:976px;width:1434px;height:2px;background:#f0f0f2;border-radius:0px;box-sizing:border-box;"></div>
<div class="b" style="left:46px;top:1002px;width:32px;height:32px;background:#f4f4f5;border:2px solid #d4d4d8;border-radius:8px;box-sizing:border-box;"></div>
<div class="b" style="left:126px;top:1002px;width:32px;height:32px;background:#dbeafe;border:2px solid #93c5fd;border-radius:8px;box-sizing:border-box;"></div>
<svg class="b" style="left:132px;top:1008px;" width="20" height="20" viewBox="0 0 24 24" fill="none" stroke="#1d4ed8" stroke-width="2.0" stroke-linecap="round" stroke-linejoin="round"><path d="M4 14a1 1 0 0 1-.78-1.63l9.9-10.2a.5.5 0 0 1 .86.46l-1.92 6.02A1 1 0 0 0 13 10h7a1 1 0 0 1 .78 1.63l-9.9 10.2a.5.5 0 0 1-.86-.46l1.92-6.02A1 1 0 0 0 11 14z"/></svg>
<div class="t" style="left:174.00px;top:1005px;font:400 28px/28px 'Liberation Sans',sans-serif;color:#09090b;letter-spacing:1.000px;-webkit-text-stroke:0.3px #09090b;">eval</div>
<div class="t" style="left:367.00px;top:1005px;font:400 28px/28px 'Liberation Sans',sans-serif;color:#09090b;letter-spacing:0.500px;-webkit-text-stroke:0.3px #09090b;">A team of expl...</div>
<div class="t" style="left:607.00px;top:1005px;font:400 28px/28px 'Liberation Sans',sans-serif;color:#09090b;letter-spacing:0.500px;-webkit-text-stroke:0.3px #09090b;">Interstellar</div>
<div class="t" style="left:847.00px;top:1005px;font:400 28px/28px 'Liberation Sans',sans-serif;color:#09090b;letter-spacing:0.500px;-webkit-text-stroke:0.3px #09090b;">Interstellar</div>
<div class="b" style="left:1092px;top:1017px;width:15px;height:2px;background:#18181b;border-radius:0px;box-sizing:border-box;"></div>
<div class="t" style="left:1351.00px;top:1005px;font:400 28px/28px 'Liberation Sans',sans-serif;color:#09090b;letter-spacing:2.400px;-webkit-text-stroke:0.3px #09090b;">100.00%</div>
<div class="b" style="left:22px;top:1056px;width:1434px;height:2px;background:#f0f0f2;border-radius:0px;box-sizing:border-box;"></div>
<div class="b" style="left:46px;top:1082px;width:32px;height:32px;background:#f4f4f5;border:2px solid #d4d4d8;border-radius:8px;box-sizing:border-box;"></div>
<div class="b" style="left:126px;top:1082px;width:32px;height:32px;background:#dbeafe;border:2px solid #93c5fd;border-radius:8px;box-sizing:border-box;"></div>
<svg class="b" style="left:132px;top:1088px;" width="20" height="20" viewBox="0 0 24 24" fill="none" stroke="#1d4ed8" stroke-width="2.0" stroke-linecap="round" stroke-linejoin="round"><path d="M4 14a1 1 0 0 1-.78-1.63l9.9-10.2a.5.5 0 0 1 .86.46l-1.92 6.02A1 1 0 0 0 13 10h7a1 1 0 0 1 .78 1.63l-9.9 10.2a.5.5 0 0 1-.86-.46l1.92-6.02A1 1 0 0 0 11 14z"/></svg>
<div class="t" style="left:174.00px;top:1085px;font:400 28px/28px 'Liberation Sans',sans-serif;color:#09090b;letter-spacing:1.000px;-webkit-text-stroke:0.3px #09090b;">eval</div>
<div class="t" style="left:367.00px;top:1085px;font:400 28px/28px 'Liberation Sans',sans-serif;color:#09090b;letter-spacing:0.500px;-webkit-text-stroke:0.3px #09090b;">A thief who en...</div>
<div class="t" style="left:607.00px;top:1085px;font:400 28px/28px 'Liberation Sans',sans-serif;color:#09090b;letter-spacing:0.500px;-webkit-text-stroke:0.3px #09090b;">Inception</div>
<div class="t" style="left:847.00px;top:1085px;font:400 28px/28px 'Liberation Sans',sans-serif;color:#09090b;letter-spacing:0.500px;-webkit-text-stroke:0.3px #09090b;">Inception</div>
<div class="b" style="left:1092px;top:1097px;width:15px;height:2px;background:#18181b;border-radius:0px;box-sizing:border-box;"></div>
<div class="t" style="left:1351.00px;top:1085px;font:400 28px/28px 'Liberation Sans',sans-serif;color:#09090b;letter-spacing:2.400px;-webkit-text-stroke:0.3px #09090b;">100.00%</div>
<div class="b" style="left:22px;top:1136px;width:1434px;height:2px;background:#f0f0f2;border-radius:0px;box-sizing:border-box;"></div>
</div>
<div class="b" style="left:1456px;top:184px;width:2px;height:1460px;background:#e4e4e7;border-radius:0px;box-sizing:border-box;"></div>
<div class="t" style="left:1490.00px;top:231px;font:400 28px/28px 'Liberation Sans',sans-serif;color:#52525b;letter-spacing:0.300px;">Scores</div>
<div class="b" style="left:2498px;top:216px;width:56px;height:56px;background:#fff;border:2px solid #e4e4e7;border-radius:12px;box-sizing:border-box;"></div>
<svg class="b" style="left:2514px;top:232px;" width="24" height="24" viewBox="0 0 24 24" fill="none" stroke="#27272a" stroke-width="2" stroke-linecap="round" stroke-linejoin="round"><path d="M20 7h-9"/><path d="M14 17H5"/><circle cx="17" cy="17" r="3"/><circle cx="7" cy="7" r="3"/></svg>
<div class="t" style="left:1489.00px;top:293px;font:400 24px/24px 'Liberation Sans',sans-serif;color:#18181b;letter-spacing:0.889px;">ExactMatch</div>
<div class="t" style="left:1638.60px;top:291px;font:400 26px/26px 'Liberation Sans',sans-serif;color:#71717a;letter-spacing:0.700px;">20</div>
<div class="t" style="left:1489.00px;top:335px;font:400 36px/36px 'Liberation Sans',sans-serif;color:#09090b;letter-spacing:2.920px;-webkit-text-stroke:0.45px #09090b;">90.00%</div>
<div class="b" style="left:2266px;top:346px;width:80px;height:12px;background:#e4e4e7;border-radius:6px;box-sizing:border-box;"></div>
<div class="b" style="left:2266px;top:346px;width:72px;height:12px;background:#8f9196;border-radius:6px;box-sizing:border-box;border-top-right-radius:0;border-bottom-right-radius:0"></div>
<div class="b" style="left:2362px;top:328px;width:192px;height:48px;background:#fff;border:2px solid #e4e4e7;border-radius:14px;box-sizing:border-box;"></div>
<svg class="b" style="left:2376px;top:340px;" width="24" height="24" viewBox="0 0 24 24" fill="none" stroke="#52525b" stroke-width="1.8" stroke-linecap="round" stroke-linejoin="round"><path d="M3 6h18"/><path d="M7 12h10"/><path d="M10 18h4"/></svg>
<svg class="b" style="left:2448px;top:340px;" width="24" height="24" viewBox="0 0 24 24" fill="none" stroke="#8b8b93" stroke-width="1.8" stroke-linecap="round" stroke-linejoin="round"><path d="M7 17 17 7"/><path d="M7 7h10v10"/></svg>
<div class="t" style="left:2472.50px;top:337px;font:400 30px/30px 'Liberation Sans',sans-serif;color:#15803d;letter-spacing:0.000px;-webkit-text-stroke:0.45px #15803d;">0</div>
<svg class="b" style="left:2498px;top:340px;" width="24" height="24" viewBox="0 0 24 24" fill="none" stroke="#e584a8" stroke-width="1.8" stroke-linecap="round" stroke-linejoin="round"><path d="M7 7l10 10"/><path d="M17 7v10H7"/></svg>
<div class="t" style="left:2522.50px;top:337px;font:400 30px/30px 'Liberation Sans',sans-serif;color:#be185d;letter-spacing:0.000px;-webkit-text-stroke:0.45px #be185d;">0</div>
<div class="t" style="left:1491.00px;top:421px;font:400 24px/24px 'Liberation Sans',sans-serif;color:#71717a;letter-spacing:0.250px;">Avg</div>
<svg class="b" style="left:1536px;top:420.5px;" width="24" height="24" viewBox="0 0 24 24" fill="none" stroke="#a1a1aa" stroke-width="1.6" stroke-linecap="round" stroke-linejoin="round"><path d="m6 9 6 6 6-6"/></svg>
<div class="t" style="left:1575.50px;top:421px;font:400 24px/24px 'Liberation Sans',sans-serif;color:#18181b;letter-spacing:1.057px;">Duration</div>
<div class="t" style="left:1689.60px;top:419px;font:400 26px/26px 'Liberation Sans',sans-serif;color:#71717a;letter-spacing:0.700px;">20</div>
<div class="t" style="left:1489.00px;top:466px;font:400 36px/36px 'Liberation Sans',sans-serif;color:#09090b;letter-spacing:2.875px;-webkit-text-stroke:0.45px #09090b;">1.08s</div>
<div class="b" style="left:2362px;top:459.7px;width:192px;height:48.0px;background:#fff;border:2px solid #e4e4e7;border-radius:14px;box-sizing:border-box;"></div>
<svg class="b" style="left:2376px;top:471.7px;" width="24" height="24" viewBox="0 0 24 24" fill="none" stroke="#52525b" stroke-width="1.8" stroke-linecap="round" stroke-linejoin="round"><path d="M3 6h18"/><path d="M7 12h10"/><path d="M10 18h4"/></svg>
<svg class="b" style="left:2448px;top:471.7px;" width="24" height="24" viewBox="0 0 24 24" fill="none" stroke="#8b8b93" stroke-width="1.8" stroke-linecap="round" stroke-linejoin="round"><path d="M7 17 17 7"/><path d="M7 7h10v10"/></svg>
<div class="t" style="left:2472.50px;top:469px;font:400 30px/30px 'Liberation Sans',sans-serif;color:#15803d;letter-spacing:0.000px;-webkit-text-stroke:0.45px #15803d;">0</div>
<svg class="b" style="left:2498px;top:471.7px;" width="24" height="24" viewBox="0 0 24 24" fill="none" stroke="#e584a8" stroke-width="1.8" stroke-linecap="round" stroke-linejoin="round"><path d="M7 7l10 10"/><path d="M17 7v10H7"/></svg>
<div class="t" style="left:2522.50px;top:469px;font:400 30px/30px 'Liberation Sans',sans-serif;color:#be185d;letter-spacing:0.000px;-webkit-text-stroke:0.45px #be185d;">0</div>
<div class="t" style="left:1491.00px;top:553px;font:400 24px/24px 'Liberation Sans',sans-serif;color:#71717a;letter-spacing:0.250px;">Avg</div>
<svg class="b" style="left:1536px;top:552.5px;" width="24" height="24" viewBox="0 0 24 24" fill="none" stroke="#a1a1aa" stroke-width="1.6" stroke-linecap="round" stroke-linejoin="round"><path d="m6 9 6 6 6-6"/></svg>
<div class="t" style="left:1575.50px;top:553px;font:400 24px/24px 'Liberation Sans',sans-serif;color:#18181b;letter-spacing:0.909px;">LLM duration</div>
<div class="t" style="left:1741.50px;top:551px;font:400 26px/26px 'Liberation Sans',sans-serif;color:#71717a;letter-spacing:0.700px;">20</div>
<div class="t" style="left:1489.00px;top:598px;font:400 36px/36px 'Liberation Sans',sans-serif;color:#09090b;letter-spacing:2.900px;-webkit-text-stroke:0.45px #09090b;">1.04s</div>
<div class="b" style="left:2362px;top:591.7px;width:192px;height:48.0px;background:#fff;border:2px solid #e4e4e7;border-radius:14px;box-sizing:border-box;"></div>
<svg class="b" style="left:2376px;top:603.7px;" width="24" height="24" viewBox="0 0 24 24" fill="none" stroke="#52525b" stroke-width="1.8" stroke-linecap="round" stroke-linejoin="round"><path d="M3 6h18"/><path d="M7 12h10"/><path d="M10 18h4"/></svg>
<svg class="b" style="left:2448px;top:603.7px;" width="24" height="24" viewBox="0 0 24 24" fill="none" stroke="#8b8b93" stroke-width="1.8" stroke-linecap="round" stroke-linejoin="round"><path d="M7 17 17 7"/><path d="M7 7h10v10"/></svg>
<div class="t" style="left:2472.50px;top:601px;font:400 30px/30px 'Liberation Sans',sans-serif;color:#15803d;letter-spacing:0.000px;-webkit-text-stroke:0.45px #15803d;">0</div>
<svg class="b" style="left:2498px;top:603.7px;" width="24" height="24" viewBox="0 0 24 24" fill="none" stroke="#e584a8" stroke-width="1.8" stroke-linecap="round" stroke-linejoin="round"><path d="M7 7l10 10"/><path d="M17 7v10H7"/></svg>
<div class="t" style="left:2522.50px;top:601px;font:400 30px/30px 'Liberation Sans',sans-serif;color:#be185d;letter-spacing:0.000px;-webkit-text-stroke:0.45px #be185d;">0</div>
<div class="t" style="left:1491.00px;top:685px;font:400 24px/24px 'Liberation Sans',sans-serif;color:#71717a;letter-spacing:0.250px;">Avg</div>
<svg class="b" style="left:1536px;top:684.5px;" width="24" height="24" viewBox="0 0 24 24" fill="none" stroke="#a1a1aa" stroke-width="1.6" stroke-linecap="round" stroke-linejoin="round"><path d="m6 9 6 6 6-6"/></svg>
<div class="t" style="left:1575.50px;top:685px;font:400 24px/24px 'Liberation Sans',sans-serif;color:#18181b;letter-spacing:0.900px;">Prompt tokens</div>
<div class="t" style="left:1757.20px;top:683px;font:400 26px/26px 'Liberation Sans',sans-serif;color:#71717a;letter-spacing:0.700px;">20</div>
<div class="t" style="left:1490.00px;top:730px;font:400 36px/36px 'Liberation Sans',sans-serif;color:#09090b;letter-spacing:3.150px;-webkit-text-stroke:0.45px #09090b;">62.55</div>
<div class="b" style="left:2362px;top:723.7px;width:192px;height:48.0px;background:#fff;border:2px solid #e4e4e7;border-radius:14px;box-sizing:border-box;"></div>
<svg class="b" style="left:2376px;top:735.7px;" width="24" height="24" viewBox="0 0 24 24" fill="none" stroke="#52525b" stroke-width="1.8" stroke-linecap="round" stroke-linejoin="round"><path d="M3 6h18"/><path d="M7 12h10"/><path d="M10 18h4"/></svg>
<svg class="b" style="left:2448px;top:735.7px;" width="24" height="24" viewBox="0 0 24 24" fill="none" stroke="#8b8b93" stroke-width="1.8" stroke-linecap="round" stroke-linejoin="round"><path d="M7 17 17 7"/><path d="M7 7h10v10"/></svg>
<div class="t" style="left:2472.50px;top:733px;font:400 30px/30px 'Liberation Sans',sans-serif;color:#15803d;letter-spacing:0.000px;-webkit-text-stroke:0.45px #15803d;">0</div>
<svg class="b" style="left:2498px;top:735.7px;" width="24" height="24" viewBox="0 0 24 24" fill="none" stroke="#e584a8" stroke-width="1.8" stroke-linecap="round" stroke-linejoin="round"><path d="M7 7l10 10"/><path d="M17 7v10H7"/></svg>
<div class="t" style="left:2522.50px;top:733px;font:400 30px/30px 'Liberation Sans',sans-serif;color:#be185d;letter-spacing:0.000px;-webkit-text-stroke:0.45px #be185d;">0</div>
<div class="t" style="left:1491.00px;top:817px;font:400 24px/24px 'Liberation Sans',sans-serif;color:#71717a;letter-spacing:0.250px;">Avg</div>
<svg class="b" style="left:1536px;top:816.5px;" width="24" height="24" viewBox="0 0 24 24" fill="none" stroke="#a1a1aa" stroke-width="1.6" stroke-linecap="round" stroke-linejoin="round"><path d="m6 9 6 6 6-6"/></svg>
<div class="t" style="left:1576.50px;top:817px;font:400 24px/24px 'Liberation Sans',sans-serif;color:#18181b;letter-spacing:0.794px;">Completion tokens</div>
<div class="t" style="left:1804.80px;top:815px;font:400 26px/26px 'Liberation Sans',sans-serif;color:#71717a;letter-spacing:0.700px;">20</div>
<div class="t" style="left:1491.00px;top:862px;font:400 36px/36px 'Liberation Sans',sans-serif;color:#09090b;letter-spacing:2.500px;-webkit-text-stroke:0.45px #09090b;">3.80</div>
<div class="b" style="left:2362px;top:855.7px;width:192px;height:48.0px;background:#fff;border:2px solid #e4e4e7;border-radius:14px;box-sizing:border-box;"></div>
<svg class="b" style="left:2376px;top:867.7px;" width="24" height="24" viewBox="0 0 24 24" fill="none" stroke="#52525b" stroke-width="1.8" stroke-linecap="round" stroke-linejoin="round"><path d="M3 6h18"/><path d="M7 12h10"/><path d="M10 18h4"/></svg>
<svg class="b" style="left:2448px;top:867.7px;" width="24" height="24" viewBox="0 0 24 24" fill="none" stroke="#8b8b93" stroke-width="1.8" stroke-linecap="round" stroke-linejoin="round"><path d="M7 17 17 7"/><path d="M7 7h10v10"/></svg>
<div class="t" style="left:2472.50px;top:865px;font:400 30px/30px 'Liberation Sans',sans-serif;color:#15803d;letter-spacing:0.000px;-webkit-text-stroke:0.45px #15803d;">0</div>
<svg class="b" style="left:2498px;top:867.7px;" width="24" height="24" viewBox="0 0 24 24" fill="none" stroke="#e584a8" stroke-width="1.8" stroke-linecap="round" stroke-linejoin="round"><path d="M7 7l10 10"/><path d="M17 7v10H7"/></svg>
<div class="t" style="left:2522.50px;top:865px;font:400 30px/30px 'Liberation Sans',sans-serif;color:#be185d;letter-spacing:0.000px;-webkit-text-stroke:0.45px #be185d;">0</div>
<div class="t" style="left:1491.00px;top:949px;font:400 24px/24px 'Liberation Sans',sans-serif;color:#71717a;letter-spacing:0.250px;">Avg</div>
<svg class="b" style="left:1536px;top:948.5px;" width="24" height="24" viewBox="0 0 24 24" fill="none" stroke="#a1a1aa" stroke-width="1.6" stroke-linecap="round" stroke-linejoin="round"><path d="m6 9 6 6 6-6"/></svg>
<div class="t" style="left:1577.50px;top:949px;font:400 24px/24px 'Liberation Sans',sans-serif;color:#18181b;letter-spacing:0.727px;">Total tokens</div>
<div class="t" style="left:1730.00px;top:947px;font:400 26px/26px 'Liberation Sans',sans-serif;color:#71717a;letter-spacing:0.700px;">20</div>
<div class="t" style="left:1490.00px;top:994px;font:400 36px/36px 'Liberation Sans',sans-serif;color:#09090b;letter-spacing:3.500px;-webkit-text-stroke:0.45px #09090b;">66.35</div>
<div class="b" style="left:2362px;top:987.7px;width:192px;height:48.0px;background:#fff;border:2px solid #e4e4e7;border-radius:14px;box-sizing:border-box;"></div>
<svg class="b" style="left:2376px;top:999.7px;" width="24" height="24" viewBox="0 0 24 24" fill="none" stroke="#52525b" stroke-width="1.8" stroke-linecap="round" stroke-linejoin="round"><path d="M3 6h18"/><path d="M7 12h10"/><path d="M10 18h4"/></svg>
<svg class="b" style="left:2448px;top:999.7px;" width="24" height="24" viewBox="0 0 24 24" fill="none" stroke="#8b8b93" stroke-width="1.8" stroke-linecap="round" stroke-linejoin="round"><path d="M7 17 17 7"/><path d="M7 7h10v10"/></svg>
<div class="t" style="left:2472.50px;top:997px;font:400 30px/30px 'Liberation Sans',sans-serif;color:#15803d;letter-spacing:0.000px;-webkit-text-stroke:0.45px #15803d;">0</div>
<svg class="b" style="left:2498px;top:999.7px;" width="24" height="24" viewBox="0 0 24 24" fill="none" stroke="#e584a8" stroke-width="1.8" stroke-linecap="round" stroke-linejoin="round"><path d="M7 7l10 10"/><path d="M17 7v10H7"/></svg>
<div class="t" style="left:2522.50px;top:997px;font:400 30px/30px 'Liberation Sans',sans-serif;color:#be185d;letter-spacing:0.000px;-webkit-text-stroke:0.45px #be185d;">0</div>
<div class="t" style="left:1491.00px;top:1081px;font:400 24px/24px 'Liberation Sans',sans-serif;color:#71717a;letter-spacing:0.250px;">Avg</div>
<svg class="b" style="left:1536px;top:1080.5px;" width="24" height="24" viewBox="0 0 24 24" fill="none" stroke="#a1a1aa" stroke-width="1.6" stroke-linecap="round" stroke-linejoin="round"><path d="m6 9 6 6 6-6"/></svg>
<div class="t" style="left:1575.50px;top:1081px;font:400 24px/24px 'Liberation Sans',sans-serif;color:#18181b;letter-spacing:0.731px;">Estimated cost</div>
<div class="t" style="left:1760.80px;top:1079px;font:400 26px/26px 'Liberation Sans',sans-serif;color:#71717a;letter-spacing:0.700px;">20</div>
<div class="t" style="left:1490.00px;top:1126px;font:400 36px/36px 'Liberation Sans',sans-serif;color:#09090b;letter-spacing:2.750px;-webkit-text-stroke:0.45px #09090b;">&lt;$0.001</div>
<div class="b" style="left:2362px;top:1119.7px;width:192px;height:48.0px;background:#fff;border:2px solid #e4e4e7;border-radius:14px;box-sizing:border-box;"></div>
<svg class="b" style="left:2376px;top:1131.7px;" width="24" height="24" viewBox="0 0 24 24" fill="none" stroke="#52525b" stroke-width="1.8" stroke-linecap="round" stroke-linejoin="round"><path d="M3 6h18"/><path d="M7 12h10"/><path d="M10 18h4"/></svg>
<svg class="b" style="left:2448px;top:1131.7px;" width="24" height="24" viewBox="0 0 24 24" fill="none" stroke="#8b8b93" stroke-width="1.8" stroke-linecap="round" stroke-linejoin="round"><path d="M7 17 17 7"/><path d="M7 7h10v10"/></svg>
<div class="t" style="left:2472.50px;top:1129px;font:400 30px/30px 'Liberation Sans',sans-serif;color:#15803d;letter-spacing:0.000px;-webkit-text-stroke:0.45px #15803d;">0</div>
<svg class="b" style="left:2498px;top:1131.7px;" width="24" height="24" viewBox="0 0 24 24" fill="none" stroke="#e584a8" stroke-width="1.8" stroke-linecap="round" stroke-linejoin="round"><path d="M7 7l10 10"/><path d="M17 7v10H7"/></svg>
<div class="t" style="left:2522.50px;top:1129px;font:400 30px/30px 'Liberation Sans',sans-serif;color:#be185d;letter-spacing:0.000px;-webkit-text-stroke:0.45px #be185d;">0</div>
<div class="t" style="left:1489.00px;top:1275px;font:400 28px/28px 'Liberation Sans',sans-serif;color:#52525b;letter-spacing:0.444px;">Experiment metadata</div>
<div class="b" style="left:1490px;top:1324px;width:1064px;height:276px;background:#fafafa;border:2px solid #e4e4e7;border-radius:14px;box-sizing:border-box;"></div>
<div class="b" style="left:1500px;top:1342px;width:126px;height:40px;background:#fafafa;border:2px solid #e4e4e7;border-radius:8px;box-sizing:border-box;"></div>
<div class="t" style="left:1513.50px;top:1351px;font:400 24px/24px 'Liberation Sans',sans-serif;color:#3f3f46;letter-spacing:0.667px;-webkit-text-stroke:0.45px #3f3f46;">YAML</div>
<svg class="b" style="left:1588px;top:1350px;" width="24" height="24" viewBox="0 0 24 24" fill="none" stroke="#71717a" stroke-width="1.6" stroke-linecap="round" stroke-linejoin="round"><path d="m6 9 6 6 6-6"/></svg>
<div class="t" style="left:1510.00px;top:1421px;font:400 24px/24px 'Liberation Mono',monospace;color:#a1a1aa;letter-spacing:0.000px;">1</div>
<div class="t" style="left:1573px;top:1420.37px;font:400 24.3px/24.3px 'Liberation Mono',monospace;letter-spacing:0.3px;color:#27272a"><span style="color:#6f42c1">model</span>: gpt-4o</div>
<div class="t" style="left:1510.00px;top:1454px;font:400 24px/24px 'Liberation Mono',monospace;color:#a1a1aa;letter-spacing:0.000px;">2</div>
<div class="t" style="left:1573px;top:1453.72px;font:400 24.3px/24.3px 'Liberation Mono',monospace;letter-spacing:0.3px;color:#27272a"><span style="color:#6f42c1">dataset</span>: Opened-movie matcher-35a65af8 dataset.csv 1724978974907</div>
<div class="t" style="left:1510.00px;top:1488px;font:400 24px/24px 'Liberation Mono',monospace;color:#a1a1aa;letter-spacing:0.000px;">3</div>
<div class="t" style="left:1573px;top:1487.07px;font:400 24.3px/24.3px 'Liberation Mono',monospace;letter-spacing:0.3px;color:#27272a"><span style="color:#6f42c1">use_cache</span>: true</div>
<div class="t" style="left:1511.00px;top:1521px;font:400 24px/24px 'Liberation Mono',monospace;color:#a1a1aa;letter-spacing:0.000px;">4</div>
<div class="t" style="left:1573px;top:1520.42px;font:400 24.3px/24.3px 'Liberation Mono',monospace;letter-spacing:0.3px;color:#27272a"><span style="color:#6f42c1">max_tokens</span>: 1024</div>
<div class="t" style="left:1510.00px;top:1554px;font:400 24px/24px 'Liberation Mono',monospace;color:#a1a1aa;letter-spacing:0.000px;">5</div>
<div class="t" style="left:1573px;top:1553.77px;font:400 24.3px/24.3px 'Liberation Mono',monospace;letter-spacing:0.3px;color:#27272a"><span style="color:#6f42c1">temperature</span>: 0</div>
</div></body></html>
